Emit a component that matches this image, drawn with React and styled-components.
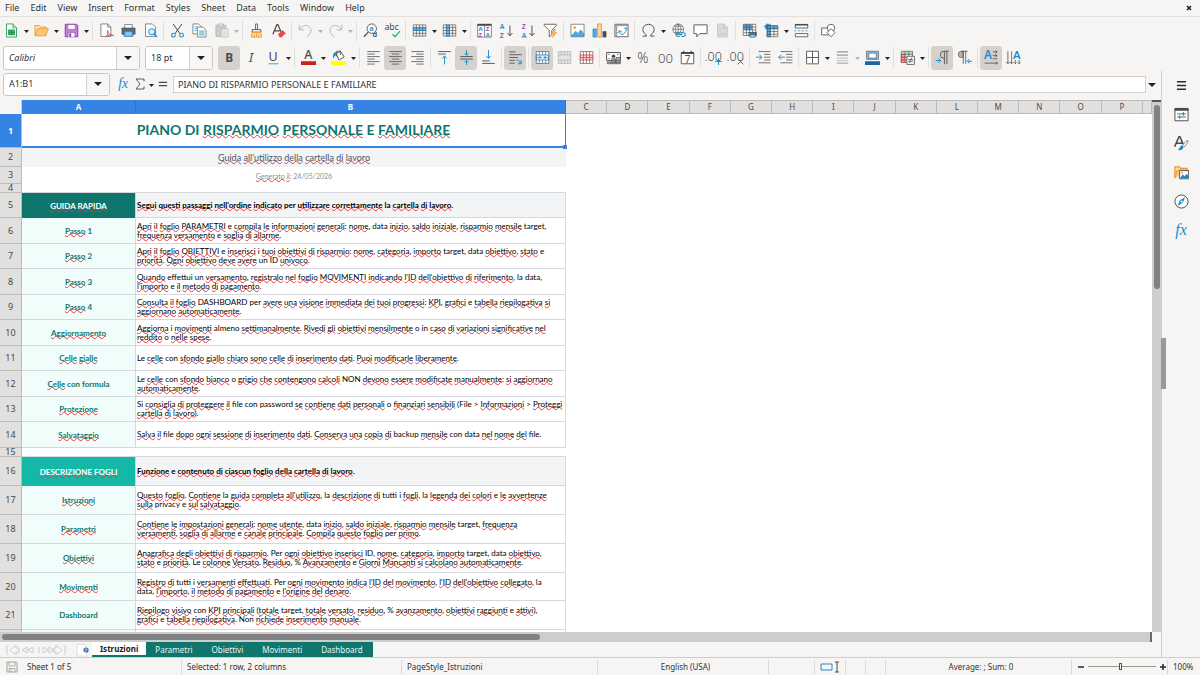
import React from "react";
import styled, { createGlobalStyle, css } from "styled-components";

const BLUE = "#1e8bcd";
const INK = "#4a4a48";
const RED = "#e0393e";
const ORANGE = "#ed9533";
const TEAL = "#0f766e";

const GlobalStyle = createGlobalStyle`
  *, *::before, *::after { box-sizing: border-box; }
  body { margin: 0; background: #f6f5f4; }
  button, input, select { font: inherit; color: inherit; margin: 0; }
`;

/* ---------- icons, drawn on a 24-unit grid ---------- */

const gridLines = (
  <path d="M2 3h20v18H2zM2 7.500h20M2 12h20M2 16.500h20M7 3v18M12 3v18M17 3v18" fill="none" stroke={INK} />
);
const glyph = (x, y, size, fill, text, extra = {}) => (
  <text x={x} y={y} fontSize={size} fill={fill} fontFamily='"Noto Sans", sans-serif' {...extra}>{text}</text>
);

const ICONS = {
  newDoc: <><path d="M4 1.500h10l6 6v15H4z" fill="#fff" stroke="#2fa85a" strokeWidth="1.500" /><path d="M14 1v7h6" fill="#9fdcb4" stroke="#2fa85a" /><path d="M7 11h10v8H7zM7 15h10M12 11v8" fill="#3fae67" stroke="#1d8348" /></>,
  open: <><path d="M1.500 20V4h7l2 2.500h9V9" fill="#fde3b0" stroke={ORANGE} strokeWidth="1.500" /><path d="M1.500 20.500 6 9h17l-4 11.500z" fill="#fac67a" stroke={ORANGE} strokeWidth="1.300" /></>,
  save: <><path d="M2 2h18l2 2v18H2z" fill="#c583dc" stroke="#8d3cab" strokeWidth="1.600" /><path d="M6 2.500h12v8H6z" fill="#fff" stroke="#8d3cab" /><path d="M6.500 22v-7h11v7" fill="#fff" stroke="#8d3cab" /><path d="M8.500 16.500h3V22h-3z" fill="#8d3cab" /></>,
  pdf: <><path d="M3 1.500h11l5 5v15H3z" fill="#fff" stroke={INK} /><path d="M14 1.500v5h5" fill="none" stroke={INK} /><path d="M11 22c3-3 4-7 3-10-1 4 4 8 9 8-5-2-9 0-12 2z" fill="none" stroke={RED} strokeWidth="1.400" /></>,
  print: <><path d="M6 2.500h12V9H6z" fill="#fff" stroke={INK} /><path d="M1.500 8h21v10h-21z" fill="#5d6a73" stroke={INK} /><path d="M5 13h14v8.500H5z" fill="#54a8e0" stroke="#1a6fa8" /><path d="M7 16h10M7 19h10" stroke="#fff" /></>,
  preview: <><path d="M4 1.500h11l5 5v15H4z" fill="#fff" stroke={INK} /><circle cx="14" cy="14" r="5" fill="#d9eefb" stroke={BLUE} strokeWidth="1.600" /><path d="m17.500 17.500 5 5" stroke={BLUE} strokeWidth="2" /></>,
  cut: <><path d="M5 1.500 16 17M19 1.500 8 17" stroke={INK} strokeWidth="1.600" /><circle cx="5.500" cy="19.500" r="3" fill="none" stroke={BLUE} strokeWidth="1.700" /><circle cx="18.500" cy="19.500" r="3" fill="none" stroke={BLUE} strokeWidth="1.700" /></>,
  copy: <><path d="M1.500 1.500h9l4 4v12h-13z" fill="#fff" stroke={INK} /><path d="M4 6h5M4 9h5M4 12h5" stroke={BLUE} /><path d="M8.500 6.500h9l5 5v11h-14z" fill="#fff" stroke={INK} /><path d="M11 13h9M11 16h9M11 19h9" stroke={BLUE} strokeWidth="1.300" /></>,
  paste: <><path d="M3 3.500h16v18H3z" fill="#cfcdca" stroke="#aaa" /><path d="M7 1.500h8v4H7z" fill="#e6e5e3" stroke="#aaa" /><path d="M11.500 9.500h11v13h-11z" fill="#f2f1f0" stroke="#aaa" /><path d="M14 13h6M14 16h6M14 19h6" stroke="#bbb" /></>,
  brush: <><path d="M10.500 1.500h3v9h-3zM5 10.500h14v4H5z" fill="#fff" stroke={INK} strokeWidth="1.300" /><path d="M5 15h14l1 7.500H4z" fill="#fde3b0" stroke={ORANGE} strokeWidth="1.500" /><path d="M8.500 18v4M12 16.500V22M15.500 18v4" stroke={ORANGE} strokeWidth="1.300" /></>,
  clear: <><path d="M3 18 9.500 2.500H11L16 14M5.500 12.500h8.500" fill="none" stroke={INK} strokeWidth="2" /><path d="m12 18 6-6 5 4-6 6.500h-3z" fill="#e9484d" stroke={RED} /></>,
  undo: <path d="M2 3v8h8M2.500 10.500C7 3 15 2 19 7s1 11-5 15" fill="none" stroke="#b9b7b4" strokeWidth="1.600" />,
  redo: <path d="M22 3v8h-8M21.500 10.500C17 3 9 2 5 7s-1 11 5 15" fill="none" stroke="#b9b7b4" strokeWidth="1.600" />,
  find: <><circle cx="14" cy="9" r="7.500" fill="#fff" stroke={INK} strokeWidth="1.400" /><path d="M8.500 14.500 1.500 22" stroke={INK} strokeWidth="2" />{glyph(10, 13, 12, BLUE, "a", { fontWeight: 600 })}{glyph(15, 23, 12, INK, "d", { fontWeight: 600 })}</>,
  spell: <>{glyph(-1, 11, 14, INK, "abc")}<path d="m12 18 4 4 8-9" fill="none" stroke="#2fb27a" strokeWidth="2.200" /></>,
  rows: <><path d="M2 7.500h20V12H2z" fill="#6db9ea" />{gridLines}<path d="M2 7.500h20V12H2z" fill="none" stroke={BLUE} /></>,
  cols: <><path d="M7 3h5v18H7z" fill="#6db9ea" />{gridLines}<path d="M7 3h5v18H7z" fill="none" stroke={BLUE} /></>,
  sort: <><path d="M1 2h22v20.500H1zM12 2v20" fill="#fff" stroke={INK} /><path d="M1 1.500h22v3H1z" fill={INK} />{glyph(2.500, 13, 9.500, BLUE, "A", { fontWeight: 700 })}{glyph(2.500, 22, 9.500, "#9d49b8", "Z", { fontWeight: 700 })}{glyph(14, 13, 9.500, "#9d49b8", "Z", { fontWeight: 700 })}{glyph(14, 22, 9.500, BLUE, "A", { fontWeight: 700 })}</>,
  sortAsc: <>{glyph(1, 10, 11, BLUE, "A", { fontWeight: 600 })}{glyph(1, 24, 11, "#9d49b8", "Z", { fontWeight: 600 })}<path d="M17.500 4v16M13.500 16l4 4.500 4-4.500" fill="none" stroke={INK} strokeWidth="1.500" /></>,
  sortDesc: <>{glyph(1, 10, 11, "#9d49b8", "Z", { fontWeight: 600 })}{glyph(1, 24, 11, BLUE, "A", { fontWeight: 600 })}<path d="M17.500 4v16M13.500 16l4 4.500 4-4.500" fill="none" stroke={INK} strokeWidth="1.500" /></>,
  filter: <><path d="M2 2h19v2l-7 8v7l-4 3V12L2 4z" fill="#fff" stroke={INK} strokeWidth="1.300" /><path d="m18 10-5 8h4l-2 5 7-8h-4l2-5z" fill="#fbb95c" stroke={ORANGE} /></>,
  image: <><path d="M1.500 2h21v20h-21z" fill="#fff" stroke={INK} /><path d="m3 20 6-7 4 4 4-6 5 6v4H3z" fill="#54a8e0" stroke={BLUE} /><circle cx="7.500" cy="7.500" r="2.200" fill="#f6a545" /></>,
  chart: <><path d="M1.500 9.500h5.500v13H1.500z" fill="#54a8e0" stroke={BLUE} /><path d="M9 1.500h6v21H9z" fill="#fbd79d" stroke={ORANGE} strokeWidth="1.500" /><path d="M17.500 13.500h5v9h-5z" fill={INK} stroke={INK} /></>,
  pivot: <><path d="M1.500 2h21v20h-21z" fill="#fff" stroke={INK} strokeWidth="1.300" /><path d="M2 4h20M4 2v20" stroke="#8b8b88" strokeWidth="2.500" strokeDasharray="3 1" /><path d="M9 13c-1 6 5 7 8 3s3-6 2-8M16 10l3-3 3 3M6 16l3-4 4 3" fill="none" stroke={BLUE} strokeWidth="1.500" /></>,
  omega: <path d="M2.500 21h6v-2C4 16 3 13 3 10.500 3 5.500 7 2 12 2s9 3.500 9 8.500c0 2.500-1 5.500-5.500 8.500v2h6" fill="none" stroke={INK} strokeWidth="1.500" />,
  link: <><circle cx="11.500" cy="10" r="8.500" fill="#fff" stroke={INK} /><path d="M3 10h17M11.500 1.500v17M5 5h13M5 15h13M11.500 1.500c-6 5-6 12 0 17M11.500 1.500c6 5 6 12 0 17" fill="none" stroke={INK} /><path d="M14 15.500h-3a3 3 0 0 0 0 6h3M17 15.500h3a3 3 0 0 1 0 6h-3M13 18.500h5" fill="none" stroke={BLUE} strokeWidth="1.800" /></>,
  comment: <path d="M1.500 3h21v14H11l-5 5v-5H1.500z" fill="#fff" stroke={INK} strokeWidth="1.400" />,
  header: <><path d="M4 1.500h10l6 6v15H4z" fill="#dbd9d7" stroke="#c0bebb" /><path d="M14 1.500v6h6M7 18h10" fill="none" stroke="#bbb" /></>,
  printArea: <><path d="M2 2h20v18H2z" fill="#fff" /><path d="M2 2h14v9H2z" fill="#54a8e0" /><path d="M2 2h20v18H2zM2 6.500h20M2 11h20M2 15.500h20M7 2v18M12 2v18M17 2v18" fill="none" stroke={INK} /><path d="M11 15h12v6H11z" fill="#5d6a73" stroke={INK} /><path d="M13 19h8v4h-8z" fill="#9ad0f3" stroke={BLUE} /></>,
  freeze: <><path d="M2 5h20v4H2zM5 2h5v20H5z" fill="#54a8e0" stroke={BLUE} /><path d="M5 4h17v18H5zM5 9h17M5 13.500h17M5 18h17M10 4v18M16 4v18" fill="none" stroke={INK} /><path d="M0 5h8M4 1v8" stroke="#1573b5" strokeWidth="1.500" /></>,
  split: <><path d="M2 3v5h20V3M2 22v-5h20v5z" fill="#fff" stroke={INK} strokeWidth="1.300" /><path d="M1.500 1.500h21V4h-21z" fill={INK} /><path d="M0 12.500h24" stroke={BLUE} strokeDasharray="4 2" /></>,
  shapes: <><path d="M1 8h11v11H1z" fill="#fff" stroke={INK} strokeWidth="1.300" /><circle cx="16" cy="8" r="6" fill="#fff" stroke={INK} strokeWidth="1.300" /><path d="m16 9 6.500 6.500L16 22l-6.500-6.500z" fill="#fff" stroke={INK} strokeWidth="1.300" /></>,
  bold: glyph(5, 19, 19, INK, "B", { fontWeight: 700 }),
  italic: glyph(8, 19, 20, INK, "I", { fontStyle: "italic" }),
  underline: <>{glyph(4, 18, 20, INK, "U")}<path d="M4 22h16" stroke="#62b0e8" strokeWidth="2" /></>,
  fontColor: <>{glyph(5, 15, 20, INK, "A", { fontWeight: 500 })}<path d="M0 18h24v6H0z" fill="#c9211e" /></>,
  fillColor: <><path d="m8 6 7-4 6 9-8 5z" fill="#fff" stroke={INK} strokeWidth="1.500" /><path d="M9 10V2h6v6" fill="none" stroke={INK} strokeWidth="1.300" /><path d="M8 3C3 4 3 8 3.500 14c2-4 3-5 5-6z" fill={BLUE} /><path d="M0 18h24v6H0z" fill="#ffff00" /></>,
  alignLeft: <path d="M2 2.500h20M2 6.500h12M2 10.500h20M2 14.500h12M2 18.500h20M2 22.500h12" stroke={INK} strokeWidth="1.200" />,
  alignCenter: <path d="M2 2.500h20M6 6.500h12M2 10.500h20M6 14.500h12M2 18.500h20M6 22.500h12" stroke={INK} strokeWidth="1.200" />,
  alignRight: <path d="M2 2.500h20M10 6.500h12M2 10.500h20M10 14.500h12M2 18.500h20M10 22.500h12" stroke={INK} strokeWidth="1.200" />,
  top: <><path d="M2 2.500h20M2 6.500h12" stroke={INK} strokeWidth="1.400" /><path d="M12 23V10M8.500 13.500l3.500-4 3.500 4" fill="none" stroke={BLUE} strokeWidth="1.500" /></>,
  middle: <><path d="M2 10.500h20M2 14.500h20" stroke={INK} strokeWidth="1.400" /><path d="M12 0v8M9 5l3 3.500L15 5M12 24v-7M9 20l3-3.500 3 3.500" fill="none" stroke={BLUE} strokeWidth="1.500" /></>,
  bottom: <><path d="M2 17.500h12M2 21.500h20" stroke={INK} strokeWidth="1.400" /><path d="M12 0v13M8.500 9.500l3.500 4 3.500-4" fill="none" stroke={BLUE} strokeWidth="1.500" /></>,
  wrap: <><path d="M2 3h10M2 7.500h20M2 12h14M2 16.500h9M2 21h9" stroke={INK} strokeWidth="1.300" /><path d="M13 16c4 0 5 2 7 5M21 16v6h-5" fill="none" stroke={BLUE} strokeWidth="1.600" /></>,
  merge: <><path d="M2 2.500h20v19H2z" fill="#fff" /><path d="M2 8h20v8H2z" fill="#e3f2fc" /><path d="M2 2.500h20v19H2zM7 3v5M12 3v5M17 3v5M7 16v5M12 16v5M17 16v5" fill="none" stroke={INK} /><path d="M2 8h20v8H2zM4 12h6M14 12h6M7 10l3 2-3 2M17 10l-3 2 3 2" fill="none" stroke={BLUE} strokeWidth="1.300" /></>,
  mergeOff: <path d="M2 2.500h20v19H2zM2 8h20M2 16h20M7 3v5M12 3v5M17 3v5M7 16v5M12 16v5M17 16v5" fill="#e6e5e3" stroke="#aaa" />,
  unmerge: <><path d="M2 2.500h20v19H2zM7 3v18M12 3v18M17 3v18" fill="#fff" stroke={INK} /><path d="M2 8h20v8H2zM2 12h20M7 8v8M12 8v8M17 8v8" fill="#fbd8d8" stroke={RED} strokeWidth="1.200" /></>,
  currency: <><path d="M1 4h22v13H1z" fill="#fff" stroke={INK} strokeWidth="1.500" /><circle cx="12" cy="10" r="2.800" fill={INK} /><path d="M4 7h2M18 7h2M4 14h2" stroke={INK} strokeWidth="1.600" /><path d="M9 14h6v8H9zM16 12h7v10h-7z" fill="#a9a8a5" stroke={INK} /><path d="M2 19h6v3H2zM9 17h14M9 20h14" fill="#a9a8a5" stroke={INK} /></>,
  percent: glyph(2, 20, 22, INK, "%", { fontWeight: 300 }),
  number: glyph(0, 20, 21, INK, "00", { fontWeight: 300 }),
  date: <><path d="M2 4h20v18H2z" fill="#fff" stroke={INK} strokeWidth="1.400" /><path d="M2 3h20v3.500H2zM5 1h2v4H5zM17 1h2v4h-2z" fill={INK} />{glyph(7.500, 20, 16, INK, "7")}</>,
  addDecimal: <>{glyph(-4, 18, 20, INK, ".00", { fontWeight: 300 })}<path d="M13 18.500h11M18.500 13v11" stroke={BLUE} strokeWidth="1.600" /></>,
  delDecimal: <>{glyph(-4, 18, 20, INK, ".00", { fontWeight: 300 })}<path d="m14 14 9 9M23 14l-9 9" stroke={RED} strokeWidth="1.600" /></>,
  indent: <><path d="M4 2.500h19M13 7h10M13 11.500h10M13 16h10M4 20.500h19" stroke={INK} strokeWidth="1.200" /><path d="M0 11.500h9M5.500 7.500l4 4-4 4" fill="none" stroke={BLUE} strokeWidth="1.500" /></>,
  outdent: <><path d="M4 2.500h19M13 7h10M13 11.500h10M13 16h10M4 20.500h19" stroke={INK} strokeWidth="1.200" /><path d="M1 11.500h10M5 7.500l-4 4 4 4" fill="none" stroke={BLUE} strokeWidth="1.500" /></>,
  borders: <><path d="M2.500 2h19v20h-19zM12 2v20M2.500 12h19" fill="#fff" stroke={INK} strokeWidth="1.400" /><path d="M2 22h20" stroke={ORANGE} strokeWidth="1.500" /></>,
  lineStyle: <><path d="M3 3h18M3 8h18" stroke="#999" strokeWidth="2" /><path d="M3 13h18" stroke="#aaa" strokeWidth="1.500" strokeDasharray="4 1" /><path d="M3 17h18" stroke="#aaa" strokeWidth="1.500" strokeDasharray="2 1" /><path d="M3 21h18" stroke="#999" strokeWidth="1.500" /></>,
  borderColor: <><path d="M2.500 2h19v13h-19z" fill="#8cc8f2" stroke={INK} /><path d="M6 5h12v8H6z" fill="#fff" stroke={INK} /><path d="M0 18h24v6H0z" fill="#1b66a8" /></>,
  condFormat: <><path d="M2 2h18v18H2z" fill="#fff" /><path d="M2 2h18v5H2z" fill="#a8e3b8" /><path d="M2 7h6v13H2z" fill="#f6a6a6" /><path d="M2 2h18v18H2zM2 7h18M2 11.500h18M2 16h18M8 2v18M14 2v18" fill="none" stroke={INK} /><path d="M2 7h6v13H2zM2 11.500h6M2 16h6" fill="none" stroke={RED} /><path d="M11 10h12v13H11z" fill="#fff" stroke={INK} strokeWidth="1.300" /><path d="M13 15h8M13 18h8M19 12l-4 9" stroke={INK} strokeWidth="1.200" /></>,
  ltr: <><path d="M22 2h-8a5.500 5.500 0 0 0 0 11h1M15 2v20M19 2v20M15 22h1.500" fill="none" stroke={INK} strokeWidth="1.400" /><path d="M1 17h8M5.500 13.500 9 17l-3.500 3.500" fill="none" stroke={BLUE} strokeWidth="1.600" /></>,
  rtl: <><path d="M10 2H7a5 5 0 0 0 0 10h3z" fill="#b5b4b1" stroke={INK} /><path d="M7 2h10M10 2v20M14 2v20" fill="none" stroke={INK} strokeWidth="1.300" /><path d="M24 18h-7M20 14.500 16.500 18l3.500 3.500" fill="none" stroke={BLUE} strokeWidth="1.600" /></>,
  textLtr: <>{glyph(0, 15, 19, BLUE, "A", { fontWeight: 600 })}<path d="M14 3h7M14 9h7M14 14h7M1 21h20M18 1l3 2-3 2M18 7l3 2-3 2M19 19l3 2-3 2" fill="none" stroke={INK} strokeWidth="1.200" /></>,
  textTtb: <>{glyph(11, 14, 18, BLUE, "A", { fontWeight: 600 })}<path d="M3 2v20M9 2v20M15 16v6M0 19l3 3 3-3M6 19l3 3 3-3M13 20l2 2 2-2M21 16v6M19 20l2 2 2-2" fill="none" stroke={INK} strokeWidth="1.200" /></>,
  fx: glyph(2, 18, 22, BLUE, "fx", { fontStyle: "italic", fontFamily: '"Liberation Serif", serif' }),
  sum: <path d="M20 7V2H4l8 10-8 10h16v-5" fill="none" stroke={INK} strokeWidth="1.800" />,
  equals: <path d="M2 8h20M2 16h20" stroke={INK} strokeWidth="3" />,
  menu: <path d="M2 4h20M2 12h20M2 20h20" stroke="#2b2b2b" strokeWidth="3.200" />,
  properties: <><path d="M1.500 3h21v19h-21z" fill="#fff" stroke={INK} strokeWidth="1.500" /><path d="M1 1.500h22V6H1z" fill={INK} /><path d="M5 11h14M5 16h14" stroke={INK} strokeWidth="1.300" /><path d="M15 8.500v5M9 13.500v5" stroke={BLUE} strokeWidth="2.200" /></>,
  styles: <><path d="M1 17 8 1h1.500l5 12M4 11.500h9" fill="none" stroke={INK} strokeWidth="2.400" /><path d="M22.500 7c-3 1-8 6-9 9l2 2c3-2 7-7 7-11z" fill="#fff" stroke={INK} /><path d="M13 15c-4 0-3 5-7 7 4 2 9 0 9-5z" fill={BLUE} /></>,
  gallery: <><path d="M1.500 21V3h7l2 2.500h10V9" fill="#fde3b0" stroke={ORANGE} strokeWidth="2" /><path d="M1.500 21 5 8h18v2" fill="#fac67a" stroke={ORANGE} strokeWidth="1.500" /><path d="M9 9h14v13H9z" fill="#fff" stroke={INK} strokeWidth="1.400" /><path d="m10 20 4-5 3 3 3-4 3 4v3H10z" fill={BLUE} /><circle cx="13" cy="12.500" r="1.500" fill={ORANGE} /></>,
  navigator: <><circle cx="12" cy="12" r="10.500" fill="#fff" stroke={INK} strokeWidth="1.500" /><path d="m18 5-4 9-8 5 3-9z" fill={BLUE} /><circle cx="12" cy="12" r="1.800" fill="#fff" /></>,
  functions: glyph(2, 19, 26, BLUE, "fx", { fontStyle: "italic", fontFamily: '"Liberation Serif", serif' }),
  saved: <><path d="M2 2h19l1 1v19H2z" fill="none" stroke="#8b8b88" strokeWidth="1.500" /><path d="M6 2v8h12V2M6 22v-7h12v7M10 16v6" fill="none" stroke="#8b8b88" strokeWidth="1.300" /></>,
  addSheet: <><path d="M0 1h14l5 5v18H0z" fill="#fff" stroke="#c9c7c4" /><circle cx="18" cy="12" r="4" fill="#fff" stroke="#2a64b5" strokeWidth="2.400" /><path d="M16 12h4M18 10v4" stroke="#2a64b5" strokeWidth="1.500" /></>,
};

const Svg = styled.svg`
  display: block;
  flex: none;
  width: ${(p) => p.$size}px;
  height: ${(p) => p.$size}px;
  overflow: visible;
`;
const Icon = ({ name, size = 15 }) => (
  <Svg viewBox="0 0 24 24" $size={size} aria-hidden="true">{ICONS[name]}</Svg>
);

const CaretSvg = styled.svg`
  display: block;
  width: ${(p) => (p.$big ? 8 : 5)}px;
  height: ${(p) => (p.$big ? 4 : 3)}px;
`;
const Caret = ({ big, dim }) => (
  <CaretSvg viewBox="0 0 10 6" preserveAspectRatio="none" $big={big} aria-hidden="true">
    <path d="M0 0h10L5 6z" fill={dim ? "#b5b3b0" : "#222"} />
  </CaretSvg>
);

/* ---------- frame ---------- */

const Window = styled.div`
  display: flex;
  flex-direction: column;
  height: 100vh;
  overflow: hidden;
  background: #f6f5f4;
  color: #2e3436;
  font: 9px/12px "Noto Sans", sans-serif;
`;

const MenuBar = styled.nav`
  display: flex;
  align-items: center;
  height: 17px;
  padding: 0 8px 0 0;
  border-bottom: 1px solid #e3e1df;
`;
const MenuItem = styled.button`
  border: 0;
  padding: 0 6px 0 5px;
  background: none;
`;
const CloseButton = styled.button`
  margin-left: auto;
  border: 0;
  padding: 0;
  background: none;
  svg { display: block; width: 6px; height: 6px; }
`;

const Toolbar = styled.div`
  display: flex;
  align-items: center;
  height: 27px;
  padding-left: ${(p) => p.$inset || 0}px;
`;
const ToolButton = styled.button`
  display: grid;
  place-items: center;
  flex: none;
  width: ${(p) => p.$width || 22}px;
  height: 24px;
  padding: 0;
  border: 0;
  border-radius: 3px;
  background: ${(p) => (p.$on ? "#d5d1cd" : "none")};
`;
const CaretButton = styled.button`
  display: grid;
  place-items: center;
  flex: none;
  width: 8px;
  height: 22px;
  padding: 2px 0 0;
  border: 0;
  background: none;
`;
const Separator = styled.span`
  flex: none;
  width: 1px;
  height: 21px;
  margin: 0 2px;
  background: #e3e1df;
`;

const Combo = styled.div`
  display: flex;
  flex: none;
  width: ${(p) => p.$width}px;
  height: ${(p) => (p.$short ? 23 : 24)}px;
  margin-right: 5px;
  border: 1px solid #cdc7c2;
  border-radius: 3px;
  background: #fff;
  overflow: hidden;
  input {
    flex: 1;
    min-width: 0;
    padding: 0 5px;
    border: 0;
    outline: 0;
    background: none;
    font-style: ${(p) => (p.$italic ? "italic" : "normal")};
  }
  button {
    display: grid;
    place-items: center;
    width: 23px;
    padding: 0;
    border: 0;
    border-left: 1px solid #d5d0cc;
    background: #f8f7f6;
  }
`;

const FormulaBar = styled.div`
  display: flex;
  align-items: center;
  height: 26px;
  padding: 0 5px 0 3px;
`;
const FormulaInput = styled.input`
  flex: 1;
  min-width: 0;
  height: 17px;
  margin: 0 2px;
  padding: 0 4px;
  border: 1px solid #d5d0cc;
  outline: 0;
  background: #fff;
  font-size: 9px;
`;

const Workspace = styled.div`
  display: flex;
  flex: 1;
  min-height: 0;
`;
const Main = styled.main`
  display: flex;
  flex-direction: column;
  flex: 1;
  min-width: 0;
`;
const SheetArea = styled.div`
  display: flex;
  flex: 1;
  min-height: 0;
  margin-top: 3px;
`;
const SheetView = styled.div`
  flex: 1;
  min-width: 0;
  overflow: hidden;
  background: #fff;
`;

const Sidebar = styled.aside`
  display: flex;
  flex-direction: column;
  align-items: center;
  gap: 5px;
  width: 39px;
  padding-top: 2px;
  border-left: 1px solid #d0cecc;
`;
const SideWrap = styled.div`
  position: relative;
  display: flex;
`;
const SplitHandle = styled.span`
  position: absolute;
  left: 0;
  top: 267px;
  width: 5px;
  height: 51px;
  background: #9a9996;
`;

/* ---------- sheet ---------- */

const Grid = styled.table`
  width: 100%;
  table-layout: fixed;
  border-spacing: 0;
  th, td { padding: 0; }
`;
const Col = styled.col`
  width: ${(p) => (p.$width ? `${p.$width}px` : "auto")};
`;
const ColHead = styled.th`
  height: 14px;
  border: solid #bdbbb9;
  border-width: 1px 1px 1px 0;
  background: #e1e0df;
  color: #4a4a48;
  font-size: 8px;
  line-height: 12px;
  font-weight: 400;
  ${(p) => p.$on && css`
    border-color: #3584e4 #2b74cd #3584e4 #3584e4;
    background: #3584e4;
    color: #fff;
    font-weight: 700;
  `}
`;
const Corner = styled.th`
  background: #f6f5f4;
  border-right: 1px solid #cfcdcb;
`;
const RowHead = styled.th`
  height: ${(p) => p.$height}px;
  border: solid #bdbbb9;
  border-width: 0 1px 1px 0;
  background: ${(p) => (p.$on ? "#3584e4" : "#e1e0df")};
  color: ${(p) => (p.$on ? "#fff" : "#4a4a48")};
  font-size: 9px;
  line-height: 8px;
  font-weight: ${(p) => (p.$on ? 700 : 400)};
`;

const Cell = styled.td`
  text-align: center;
  white-space: nowrap;
  font-family: Lato, "Liberation Sans", sans-serif;
  ${(p) => p.$kind === "title" && css`
    position: relative;
    border: solid #3584e4;
    border-width: 0 1px 2px 0;
    color: ${TEAL};
    font-size: 14px;
    line-height: 18px;
    font-weight: 700;
    &::after {
      content: "";
      position: absolute;
      right: -2px;
      bottom: -3px;
      width: 4px;
      height: 4px;
      background: #3584e4;
    }
  `}
  ${(p) => p.$kind === "subtitle" && css`
    background: #f3f4f6;
    color: #4b5563;
    font-size: 9px;
  `}
  ${(p) => p.$kind === "date" && css`
    color: #8b8f98;
    font-size: 7px;
    line-height: 10px;
  `}
  ${(p) => (p.$kind === "guide" || p.$kind === "sheets") && css`
    border-right: 1px solid #d1d5db;
    background: ${p.$kind === "guide" ? TEAL : "#14b8a6"};
    color: #fff;
    font-size: 8px;
    font-weight: 700;
  `}
  ${(p) => p.$kind === "label" && css`
    border: solid #d5d9de;
    border-width: 0 1px 1px 0;
    background: #f0fdfa;
    color: ${TEAL};
    font-size: 8px;
    font-weight: 700;
  `}
  ${(p) => (p.$kind === "text" || p.$kind === "lead") && css`
    padding-left: 1px !important;
    border: solid #d5d9de;
    border-width: 0 1px 1px 0;
    color: #000;
    text-align: left;
    font-size: 8px;
    line-height: 9px;
  `}
  ${(p) => p.$kind === "lead" && css`
    background: #f3f4f6;
    font-weight: 700;
  `}
  ${(p) => p.$kind === "gap" && css`
    border-bottom: 1px solid #d5d9de;
  `}
`;
const Line = styled.span`
  display: block;
`;
const Misspelled = styled.span`
  text-decoration: underline wavy #e5383d 1px;
  text-decoration-skip-ink: none;
  text-underline-offset: -1px;
`;

const DICTIONARY = new Set([
  "PIANO", "DI", "E", "e", "o", "i", "in", "la", "per", "Per", "con", "data", "target", "file", "File",
  "password", "backup", "privacy", "ID", "NON", "Non", "DASHBOARD", "Dashboard", "Le", "Si", "formula",
  "tutti", "almeno", "un", "effettui",
]);

const Checked = ({ text }) =>
  text.split(/([\p{L}'’]+)/u).map((part, i) =>
    i % 2 && !DICTIONARY.has(part) ? <Misspelled key={i}>{part}</Misspelled> : part
  );

const ROWS = [
  { h: 34, wide: "title", a: "PIANO DI RISPARMIO PERSONALE E FAMILIARE" },
  { h: 19, wide: "subtitle", a: "Guida all'utilizzo della cartella di lavoro" },
  { h: 17, wide: "date", a: "Generato il: 24/05/2026" },
  { h: 9, wide: "gap", a: "" },
  { h: 25, head: "guide", a: "GUIDA RAPIDA", b: ["Segui questi passaggi nell'ordine indicato per utilizzare correttamente la cartella di lavoro."] },
  { h: 26, a: "Passo 1", b: ["Apri il foglio PARAMETRI e compila le informazioni generali: nome, data inizio, saldo iniziale, risparmio mensile target,", "frequenza versamento e soglia di allarme."] },
  { h: 25, a: "Passo 2", b: ["Apri il foglio OBIETTIVI e inserisci i tuoi obiettivi di risparmio: nome, categoria, importo target, data obiettivo, stato e", "priorità. Ogni obiettivo deve avere un ID univoco."] },
  { h: 26, a: "Passo 3", b: ["Quando effettui un versamento, registralo nel foglio MOVIMENTI indicando l'ID dell'obiettivo di riferimento, la data,", "l'importo e il metodo di pagamento."] },
  { h: 25, a: "Passo 4", b: ["Consulta il foglio DASHBOARD per avere una visione immediata dei tuoi progressi: KPI, grafici e tabella riepilogativa si", "aggiornano automaticamente."] },
  { h: 26, a: "Aggiornamento", b: ["Aggiorna i movimenti almeno settimanalmente. Rivedi gli obiettivi mensilmente o in caso di variazioni significative nel", "reddito o nelle spese."] },
  { h: 25, a: "Celle gialle", b: ["Le celle con sfondo giallo chiaro sono celle di inserimento dati. Puoi modificarle liberamente."] },
  { h: 26, a: "Celle con formula", b: ["Le celle con sfondo bianco o grigio che contengono calcoli NON devono essere modificate manualmente: si aggiornano", "automaticamente."] },
  { h: 25, a: "Protezione", b: ["Si consiglia di proteggere il file con password se contiene dati personali o finanziari sensibili (File > Informazioni > Proteggi", "cartella di lavoro)."] },
  { h: 26, a: "Salvataggio", b: ["Salva il file dopo ogni sessione di inserimento dati. Conserva una copia di backup mensile con data nel nome del file."] },
  { h: 9, wide: "gap", a: "" },
  { h: 29, head: "sheets", a: "DESCRIZIONE FOGLI", b: ["Funzione e contenuto di ciascun foglio della cartella di lavoro."] },
  { h: 29, a: "Istruzioni", b: ["Questo foglio. Contiene la guida completa all'utilizzo, la descrizione di tutti i fogli, la legenda dei colori e le avvertenze", "sulla privacy e sul salvataggio."] },
  { h: 29, a: "Parametri", b: ["Contiene le impostazioni generali: nome utente, data inizio, saldo iniziale, risparmio mensile target, frequenza", "versamenti, soglia di allarme e canale principale. Compila questo foglio per primo."] },
  { h: 29, a: "Obiettivi", b: ["Anagrafica degli obiettivi di risparmio. Per ogni obiettivo inserisci ID, nome, categoria, importo target, data obiettivo,", "stato e priorità. Le colonne Versato, Residuo, % Avanzamento e Giorni Mancanti si calcolano automaticamente."] },
  { h: 28, a: "Movimenti", b: ["Registro di tutti i versamenti effettuati. Per ogni movimento indica l'ID del movimento, l'ID dell'obiettivo collegato, la", "data, l'importo, il metodo di pagamento e l'origine del denaro."] },
  { h: 29, a: "Dashboard", b: ["Riepilogo visivo con KPI principali (totale target, totale versato, residuo, % avanzamento, obiettivi raggiunti e attivi),", "grafici e tabella riepilogativa. Non richiede inserimento manuale."] },
];
const COLUMNS = "CDEFGHIJKLMNOP".split("");

const Sheet = () => (
  <Grid>
    <colgroup>
      <Col $width={22} />
      <Col $width={114} />
      <Col $width={430} />
      {COLUMNS.map((c) => <Col key={c} />)}
      <Col $width={9} />
    </colgroup>
    <thead>
      <tr>
        <Corner />
        <ColHead $on>A</ColHead>
        <ColHead $on>B</ColHead>
        {COLUMNS.map((c) => <ColHead key={c}>{c}</ColHead>)}
        <ColHead />
      </tr>
    </thead>
    <tbody>
      {ROWS.map((row, i) => (
        <tr key={i}>
          <RowHead scope="row" $height={row.h} $on={i === 0}>{i + 1}</RowHead>
          {row.wide ? (
            <Cell colSpan={2} $kind={row.wide}><Checked text={row.a} /></Cell>
          ) : (
            <>
              <Cell $kind={row.head || "label"}><Checked text={row.a} /></Cell>
              <Cell $kind={row.head ? "lead" : "text"}>
                {row.b.map((line) => <Line key={line}><Checked text={line} /></Line>)}
              </Cell>
            </>
          )}
          <td colSpan={COLUMNS.length + 1} />
        </tr>
      ))}
      <tr>
        <RowHead scope="row" $height={29} />
        <Cell $kind="label" />
        <Cell $kind="text" />
        <td colSpan={COLUMNS.length + 1} />
      </tr>
    </tbody>
  </Grid>
);

/* ---------- scroll bars ---------- */

const VTrack = styled.div`
  width: 9px;
  padding: 3px 1px 0 2px;
  border-top: 2px solid #555;
  background: #cdcdcd;
`;
const VThumb = styled.div`
  height: 35%;
  border-radius: 3px;
  background: #808180;
`;
const HTrack = styled.div`
  height: 10px;
  margin-right: 9px;
  padding: 2px 3px 2px 2px;
  border-right: 2px solid #6a6a6a;
  background: #cdcdcd;
`;
const HThumb = styled.div`
  width: 47%;
  height: 6px;
  border-radius: 3px;
  background: #808180;
`;

/* ---------- tabs and status ---------- */

const TabBar = styled.div`
  display: flex;
  height: 15px;
  font-size: 8px;
`;
const TabNav = styled.div`
  display: flex;
  align-items: center;
  width: 74px;
  padding-left: 6px;
  svg { display: block; width: 60px; height: 12px; }
`;
const AddSheet = styled.button`
  display: grid;
  place-items: center;
  width: 18px;
  padding: 0;
  border: 0;
  background: none;
`;
const Tab = styled.button`
  padding: ${(p) => (p.$on ? "0 8px" : "0 10px 0 9px")};
  border: 0;
  border-bottom: ${(p) => (p.$on ? 2 : 0)}px solid ${TEAL};
  background: ${(p) => (p.$on ? "#fff" : TEAL)};
  color: ${(p) => (p.$on ? "#1a1a1a" : "#e9f5f3")};
  font-weight: ${(p) => (p.$on ? 700 : 400)};
`;

const StatusBar = styled.footer`
  display: grid;
  grid-template-columns: 181fr 220fr 196fr 171fr 46fr 31fr 20fr 20fr 186fr 96fr 33fr;
  align-items: center;
  height: 18px;
  border-top: 1px solid #cfcdcb;
  font-size: 8px;
`;
const StatusItem = styled.span`
  display: flex;
  align-items: center;
  justify-content: ${(p) => (p.$center ? "center" : "flex-start")};
  gap: ${(p) => (p.$first ? 9 : 3)}px;
  height: 14px;
  min-width: 0;
  padding-left: 5px;
  border-left: 1px solid ${(p) => (p.$first ? "transparent" : "#dcdad8")};
  white-space: nowrap;
`;
const ZoomButton = styled.button`
  flex: none;
  width: 8px;
  height: 8px;
  padding: 0;
  border: 0;
  background: none;
  svg { display: block; width: 8px; height: 8px; }
`;
const ZoomRange = styled.input`
  appearance: none;
  flex: 1;
  min-width: 0;
  height: 10px;
  background: linear-gradient(#9a9996, #9a9996) center / 100% 1px no-repeat;
  &::-webkit-slider-thumb {
    appearance: none;
    width: 3px;
    height: 7px;
    border: 1px solid #555;
    background: #f6f5f4;
  }
`;

const renderTools = (tools) =>
  tools.map((tool, i) => {
    if (tool === "|") return <Separator key={i} />;
    const [, name, mark] = tool.match(/^(\w+)([^\w]*)$/);
    const split = mark.includes("~") || mark.includes("-");
    return (
      <React.Fragment key={i}>
        <ToolButton aria-label={name} $on={mark.includes("*")}><Icon name={name} /></ToolButton>
        {split && <CaretButton aria-label={`${name} options`}><Caret dim={mark.includes("-")} /></CaretButton>}
      </React.Fragment>
    );
  });

/* "~" adds a drop-down arrow, "-" a dimmed one, "*" marks the button as pressed */
const STANDARD = "newDoc~ open~ save~ | pdf print preview | cut copy paste- | brush clear | undo- redo- | find spell | rows~ cols~ | sort sortAsc sortDesc filter | image chart pivot | omega~ link comment header | printArea freeze~ split | shapes".split(" ");
const FORMATTING = "bold* italic underline~ | fontColor~ fillColor~ | alignLeft alignCenter* alignRight | top middle* bottom | wrap* | merge* mergeOff unmerge | currency~ percent number date | addDecimal delDecimal | indent outdent | borders~ lineStyle- borderColor~ | condFormat~ | ltr* rtl | textLtr* textTtb".split(" ");
const MENUS = ["File", "Edit", "View", "Insert", "Format", "Styles", "Sheet", "Data", "Tools", "Window", "Help"];
const TABS = ["Istruzioni", "Parametri", "Obiettivi", "Movimenti", "Dashboard"];

export default function App() {
  return (
    <Window>
      <GlobalStyle />
      <MenuBar>
        {MENUS.map((m) => <MenuItem key={m}>{m}</MenuItem>)}
        <CloseButton aria-label="Close document">
          <svg viewBox="0 0 6 6"><path d="m1 1 4 4M5 1 1 5" stroke="#222" strokeWidth="1.600" /></svg>
        </CloseButton>
      </MenuBar>
      <Toolbar>{renderTools(STANDARD)}</Toolbar>
      <Toolbar $inset={3}>
        <Combo $width={137} $italic>
          <input aria-label="Font name" defaultValue="Calibri" />
          <button aria-label="Font list"><Caret big /></button>
        </Combo>
        <Combo $width={68}>
          <input aria-label="Font size" defaultValue="18 pt" />
          <button aria-label="Size list"><Caret big /></button>
        </Combo>
        {renderTools(FORMATTING)}
      </Toolbar>
      <Workspace>
        <Main>
          <FormulaBar>
            <Combo $width={107} $short>
              <input aria-label="Name box" defaultValue="A1:B1" />
              <button aria-label="Name list"><Caret big /></button>
            </Combo>
            <ToolButton aria-label="Function wizard" $width={18}><Icon name="fx" /></ToolButton>
            <ToolButton aria-label="Sum" $width={14}><Icon name="sum" size={12} /></ToolButton>
            <CaretButton aria-label="Sum options"><Caret /></CaretButton>
            <ToolButton aria-label="Formula" $width={16}><Icon name="equals" size={10} /></ToolButton>
            <FormulaInput aria-label="Input line" defaultValue="PIANO DI RISPARMIO PERSONALE E FAMILIARE" />
            <CaretButton aria-label="Expand"><Caret big /></CaretButton>
          </FormulaBar>
          <SheetArea>
            <SheetView><Sheet /></SheetView>
            <VTrack><VThumb /></VTrack>
          </SheetArea>
          <HTrack><HThumb /></HTrack>
          <TabBar>
            <TabNav>
              <svg viewBox="0 0 60 12" fill="none" stroke="#cfcdcb">
                <path d="M1 1v10M10 1 4 6l6 5V8h3V4h-3zM21 3l-5 3 5 3zM27 3l-5 3 5 3zM33 3v6M37 3l5 3-5 3zM43 3l5 3-5 3zM50 1l6 5-6 5V8h-2V4h2zM59 1v10" />
              </svg>
            </TabNav>
            <AddSheet aria-label="Add sheet"><Icon name="addSheet" size={12} /></AddSheet>
            {TABS.map((t, i) => <Tab key={t} $on={i === 0}>{t}</Tab>)}
          </TabBar>
        </Main>
        <SideWrap>
          <SplitHandle />
          <Sidebar>
            {["menu", "properties", "styles", "gallery", "navigator", "functions"].map((n) => (
              <ToolButton key={n} aria-label={n}><Icon name={n} size={n === "menu" ? 11 : 15} /></ToolButton>
            ))}
          </Sidebar>
        </SideWrap>
      </Workspace>
      <StatusBar>
        <StatusItem $first><Icon name="saved" size={12} />Sheet 1 of 5</StatusItem>
        <StatusItem>Selected: 1 row, 2 columns</StatusItem>
        <StatusItem>PageStyle_Istruzioni</StatusItem>
        <StatusItem $center>English (USA)</StatusItem>
        <StatusItem />
        <StatusItem>
          <svg width="22" height="12" viewBox="0 0 22 12" fill="none">
            <path d="M1 3h11v6H1z" stroke={BLUE} />
            <path d="M15 1h4M17 1v10M15 11h4" stroke={INK} />
          </svg>
        </StatusItem>
        <StatusItem />
        <StatusItem />
        <StatusItem $center>Average: ; Sum: 0</StatusItem>
        <StatusItem>
          <ZoomButton aria-label="Zoom out"><svg viewBox="0 0 8 8"><path d="M1 4h6" stroke="#222" strokeWidth="1.500" /></svg></ZoomButton>
          <ZoomRange type="range" aria-label="Zoom" min="0" max="100" defaultValue="48" />
          <ZoomButton aria-label="Zoom in"><svg viewBox="0 0 8 8"><path d="M1 4h6M4 1v6" stroke="#222" strokeWidth="1.500" /></svg></ZoomButton>
        </StatusItem>
        <StatusItem>100%</StatusItem>
      </StatusBar>
    </Window>
  );
}
